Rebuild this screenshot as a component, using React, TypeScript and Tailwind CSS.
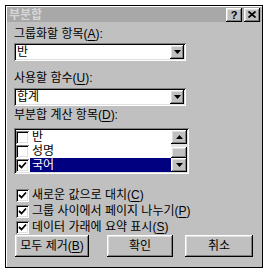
import React from "react";

const raised =
  "shadow-[inset_-1px_-1px_#000,inset_1px_1px_#fff,inset_-2px_-2px_#808080,inset_2px_2px_#dfdfdf]";
const sunken =
  "shadow-[inset_1px_1px_#808080,inset_-1px_-1px_#fff,inset_2px_2px_#000,inset_-2px_-2px_#dfdfdf]";

function Down() {
  return (
    <svg width="7" height="4" viewBox="0 0 7 4">
      <polygon points="0,0 7,0 3.5,4" fill="#000" />
    </svg>
  );
}
function Up() {
  return (
    <svg width="7" height="4" viewBox="0 0 7 4">
      <polygon points="0,4 7,4 3.5,0" fill="#000" />
    </svg>
  );
}

function Check() {
  return (
    <svg width="9" height="9" viewBox="0 0 9 9">
      <path d="M1 4 L3.5 6.5 L8 1.5" stroke="#000" strokeWidth="1.8" fill="none" />
    </svg>
  );
}

function Box({ checked }: { checked: boolean }) {
  return (
    <div className={`w-[13px] h-[13px] bg-white flex items-center justify-center shrink-0 ${sunken}`}>
      {checked && <Check />}
    </div>
  );
}

function Combo({ value }: { value: string }) {
  return (
    <div className={`w-[172px] h-[18px] bg-white flex items-center p-[2px] ${sunken}`}>
      <div className="flex-1 pl-[1px] leading-[14px]">{value}</div>
      <div className={`w-[14px] h-[14px] bg-[#c0c0c0] flex items-center justify-center ${raised}`}>
        <Down />
      </div>
    </div>
  );
}

function U({ c }: { c: string }) {
  return <span className="underline underline-offset-2">{c}</span>;
}

function Btn({ w, ml, children }: { w: string; ml: string; children: React.ReactNode }) {
  return (
    <div className={`${w} ${ml} h-[22px] bg-[#c0c0c0] flex items-center justify-center ${raised}`}>
      {children}
    </div>
  );
}

export default function App() {
  return (
    <div className="w-[270px] h-[276px] bg-white pt-[5px] pl-[5px] font-['Liberation_Sans','Noto_Sans_CJK_KR',sans-serif] text-[12px] leading-[16px] text-black">
      <div className="w-[258px] h-[263px] border border-black bg-[#c0c0c0] shadow-[inset_1px_1px_#fff] p-px flex flex-col">
        {/* title bar */}
        <div className="h-[15px] bg-[#a8a8a8] flex items-center justify-between pl-[2px] pr-[1px]">
          <span className="text-[#d6d6d6] font-bold text-[12px] leading-[14px]">부분합</span>
          <div className="flex gap-[2px]">
            <div className={`w-[16px] h-[14px] bg-[#c0c0c0] flex items-center justify-center font-bold text-[11px] leading-[12px] ${raised}`}>
              ?
            </div>
            <div className={`w-[16px] h-[14px] bg-[#c0c0c0] flex items-center justify-center ${raised}`}>
              <svg width="8" height="7" viewBox="0 0 8 7">
                <path d="M0.5 0.5 L7.5 6.5 M7.5 0.5 L0.5 6.5" stroke="#000" strokeWidth="1.7" />
              </svg>
            </div>
          </div>
        </div>

        <div className="pl-[7px] flex flex-col">
          <div className="mt-[4px] h-[16px]">
            그룹화할 항목(<U c="A" />):
          </div>
          <div className="mt-[1px]">
            <Combo value="반" />
          </div>
          <div className="mt-[9px] h-[16px]">
            사용할 함수(<U c="U" />):
          </div>
          <div className="mt-[2px]">
            <Combo value="합계" />
          </div>
          <div className="mt-[1px] h-[16px]">
            부분합 계산 항목(<U c="D" />):
          </div>

          {/* listbox */}
          <div className={`mt-[5px] w-[175px] h-[46px] bg-white p-[2px] flex ${sunken}`}>
            <div className="flex-1 flex flex-col">
              {[
                { t: "반", c: false, s: false },
                { t: "성명", c: false, s: false },
                { t: "국어", c: true, s: true },
              ].map((it) => (
                <div key={it.t} className="h-[14px] flex items-center">
                  <Box checked={it.c} />
                  <div
                    className={`ml-[1px] flex-1 h-[14px] leading-[14px] pl-[2px] ${
                      it.s ? "bg-[#000080] text-white" : ""
                    }`}
                  >
                    {it.t}
                  </div>
                </div>
              ))}
            </div>
            <div className="w-[16px] flex flex-col">
              <div className={`h-[14px] bg-[#c0c0c0] flex items-center justify-center ${raised}`}>
                <Up />
              </div>
              <div className="h-[3px] bg-[#e4e4e4]" />
              <div className={`h-[11px] bg-[#c0c0c0] ${raised}`} />
              <div className={`h-[14px] bg-[#c0c0c0] flex items-center justify-center ${raised}`}>
                <Down />
              </div>
            </div>
          </div>

          {/* checkboxes */}
          <div className="mt-[13px] flex flex-col">
            {[
              <>새로운 값으로 대치(<U c="C" />)</>,
              <>그룹 사이에서 페이지 나누기(<U c="P" />)</>,
              <>데이터 가래에 요약 표시(<U c="S" />)</>,
            ].map((t, i) => (
              <div key={i} className="h-[16px] flex items-center ml-[2px]">
                <Box checked={true} />
                <span className="ml-[3px]">{t}</span>
              </div>
            ))}
          </div>

          <div className="mt-[0px] flex">
            <Btn w="w-[74px]" ml="ml-[1px]">
              모두 제거(<U c="B" />)
            </Btn>
            <Btn w="w-[66px]" ml="ml-[18px]">
              확인
            </Btn>
            <Btn w="w-[68px]" ml="ml-[12px]">
              취소
            </Btn>
          </div>
        </div>
      </div>
    </div>
  );
}
